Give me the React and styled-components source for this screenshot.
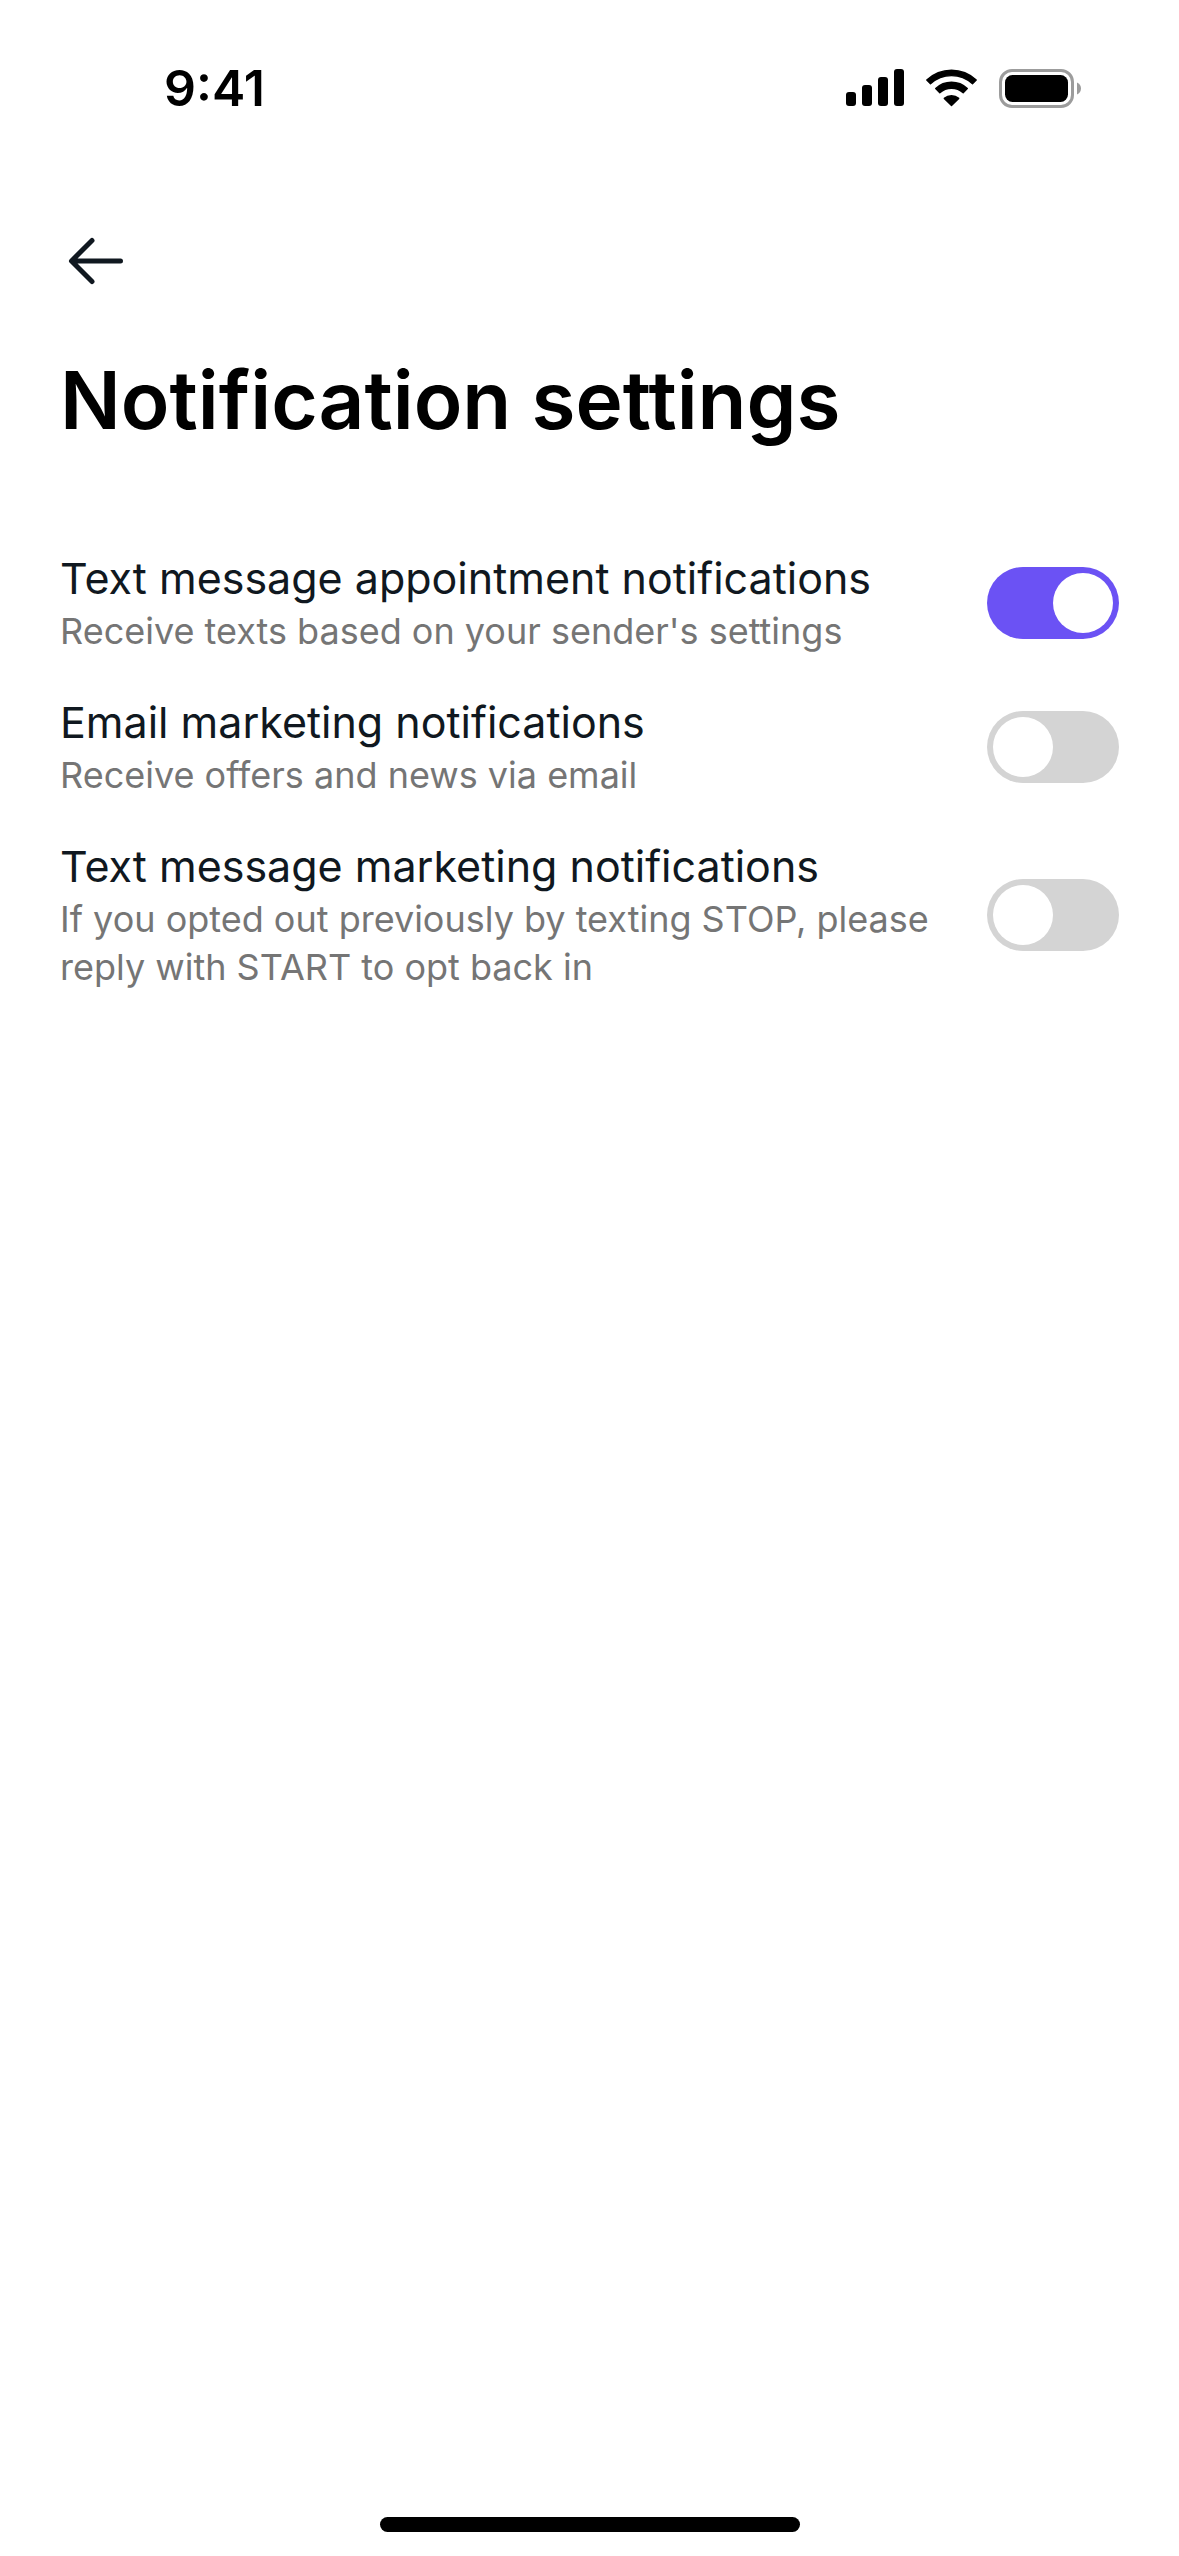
import React, { useState } from "react";
import styled, { createGlobalStyle } from "styled-components";

const SETTINGS = [
  {
    id: "text-appointment",
    title: "Text message appointment notifications",
    description: "Receive texts based on your sender's settings",
    enabled: true
  },
  {
    id: "email-marketing",
    title: "Email marketing notifications",
    description: "Receive offers and news via email",
    enabled: false
  },
  {
    id: "text-marketing",
    title: "Text message marketing notifications",
    description:
      "If you opted out previously by texting STOP, please reply with START to opt back in",
    enabled: false
  }
];

const SignalIcon = () => (
  <svg width="58" height="38" viewBox="0 0 58 38" aria-hidden="true">
    <rect x="0" y="23" width="10" height="14" rx="3" />
    <rect x="16" y="16" width="10" height="21" rx="3" />
    <rect x="32" y="8" width="10" height="29" rx="3" />
    <rect x="48" y="0" width="10" height="37" rx="3" />
  </svg>
);

const WifiIcon = () => (
  <svg
    width="51"
    height="38"
    viewBox="0 0 51 38"
    stroke="#000"
    strokeWidth="1.4"
    strokeLinejoin="round"
    aria-hidden="true"
  >
    <path d="M.8 11A36 36 0 0 1 50.200 11L46.500 14.800A31 31 0 0 0 4.500 14.800z" />
    <path d="M9.700 19.600A23 23 0 0 1 41.300 19.600L37.200 23.700A17.500 17.500 0 0 0 13.800 23.700z" />
    <path d="M18.300 29.400A11 11 0 0 1 32.700 29.400L25.500 36.400z" />
  </svg>
);

const BatteryIcon = () => (
  <svg width="82" height="39" viewBox="0 0 82 39" aria-hidden="true">
    <rect
      x="1.500"
      y="1.500"
      width="72"
      height="36"
      rx="11.500"
      fill="none"
      stroke="#9c9c9c"
      strokeWidth="3"
    />
    <rect x="6" y="6" width="63" height="27" rx="7.500" />
    <path d="M78 13.500v12c2.400-1 4-3.300 4-6s-1.600-5-4-6z" fill="#9c9c9c" />
  </svg>
);

const BackIcon = () => (
  <svg
    width="72"
    height="72"
    viewBox="0 0 72 72"
    fill="none"
    stroke="#101820"
    strokeWidth="5"
    strokeLinecap="round"
    strokeLinejoin="round"
    aria-hidden="true"
  >
    <path d="M60.500 36H12M32 15.500L11.500 36L32 56.500" />
  </svg>
);

const App = () => {
  const [settings, setSettings] = useState(SETTINGS);

  const toggleSetting = id => {
    setSettings(
      settings.map(item =>
        item.id === id ? { ...item, enabled: !item.enabled } : item
      )
    );
  };

  return (
    <React.Fragment>
      <GlobalStyle />
      <Screen>
        <StatusBar>
          <Time>9:41</Time>
          <StatusIcons>
            <SignalIcon />
            <WifiIcon />
            <BatteryIcon />
          </StatusIcons>
        </StatusBar>
        <Content>
          <BackButton type="button" aria-label="Back">
            <BackIcon />
          </BackButton>
          <Heading>Notification settings</Heading>
          <SettingList>
            {settings.map(({ id, title, description, enabled }) => (
              <SettingRow key={id} htmlFor={id}>
                <SettingText>
                  <SettingTitle>{title}</SettingTitle>
                  <SettingDescription>{description}</SettingDescription>
                </SettingText>
                <Toggle
                  type="checkbox"
                  role="switch"
                  id={id}
                  checked={enabled}
                  onChange={() => toggleSetting(id)}
                />
              </SettingRow>
            ))}
          </SettingList>
        </Content>
        <HomeIndicator />
      </Screen>
    </React.Fragment>
  );
};

const GlobalStyle = createGlobalStyle`
  *,
  *::before,
  *::after {
    box-sizing: border-box;
  }

  body {
    margin: 0;
    background: #fff;
    color: #000;
    font-family: Inter, "Liberation Sans", sans-serif;
  }
`;

const Screen = styled.div`
  display: flex;
  flex-direction: column;
  min-height: 100vh;
`;

const StatusBar = styled.div`
  display: flex;
  align-items: center;
  justify-content: space-between;
  height: 176px;
  padding: 0 98px 0 164px;
`;

const Time = styled.span`
  font-size: 50px;
  font-weight: 600;
  line-height: 60px;
`;

const StatusIcons = styled.div`
  display: flex;
  align-items: center;
  gap: 22px;
`;

const Content = styled.main`
  flex: 1;
  padding: 49px 60px;
`;

const BackButton = styled.button`
  display: block;
  padding: 0;
  border: 0;
  background: none;
  cursor: pointer;

  svg {
    display: block;
  }
`;

const Heading = styled.h1`
  margin: 55px 0 0;
  font-size: 80px;
  font-weight: 600;
  line-height: 96px;
`;

const SettingList = styled.div`
  display: flex;
  flex-direction: column;
  gap: 40px;
  margin-top: 103px;
`;

const SettingRow = styled.label`
  display: flex;
  align-items: center;
  justify-content: space-between;
  gap: 36px;
  cursor: pointer;
`;

const SettingText = styled.span`
  flex: 1;
  display: flex;
  flex-direction: column;
  gap: 2px;
`;

const SettingTitle = styled.span`
  color: #101820;
  font-size: 43px;
  line-height: 54px;
`;

const SettingDescription = styled.span`
  color: #757575;
  font-size: 36px;
  line-height: 48px;
`;

const Toggle = styled.input`
  appearance: none;
  display: flex;
  flex-shrink: 0;
  width: 132px;
  height: 72px;
  margin: 0;
  padding: 6px;
  border-radius: 36px;
  background: #d4d4d4;
  cursor: pointer;
  transition: background 0.2s ease-in-out;

  &::before {
    content: "";
    width: 60px;
    height: 60px;
    border-radius: 50%;
    background: #fff;
  }

  &:checked {
    justify-content: flex-end;
    background: #6b52f4;
  }
`;

const HomeIndicator = styled.div`
  align-self: center;
  width: 420px;
  height: 15px;
  margin-bottom: 24px;
  border-radius: 8px;
  background: #000;
`;

export default App;
